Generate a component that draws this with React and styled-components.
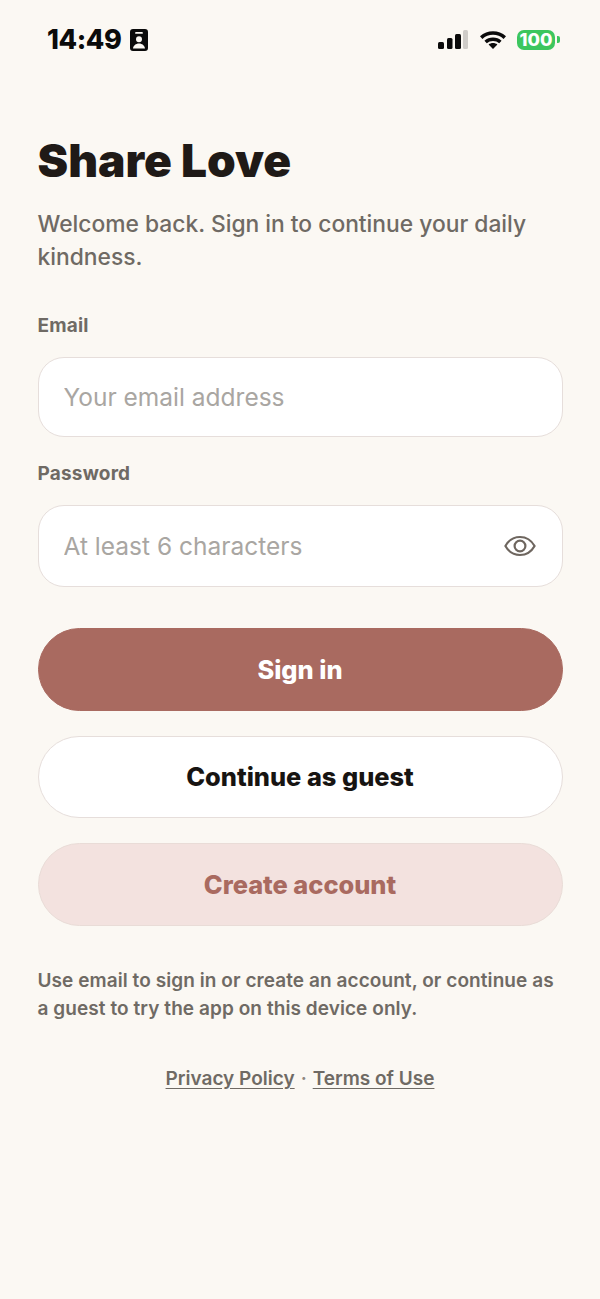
import React, { useState } from 'react';
import styled, { createGlobalStyle } from 'styled-components';

const GlobalStyle = createGlobalStyle`
  html, body {
    margin: 0;
    padding: 0;
    background: #fbf8f3;
  }
  * {
    box-sizing: border-box;
  }
`;

const Page = styled.div`
  width: 600px;
  height: 1299px;
  overflow: hidden;
  background: #fbf8f3;
  font-family: Inter, "Liberation Sans", sans-serif;
`;

const StatusBar = styled.div`
  height: 54px;
  padding: 25px 40px 0 47px;
  display: flex;
  align-items: center;
  justify-content: space-between;
`;

const StatusGroup = styled.div`
  display: flex;
  align-items: center;
  gap: ${(p) => p.$gap || 0}px;
`;

const Clock = styled.span`
  font-size: 27px;
  font-weight: 800;
  line-height: 30px;
  color: #0b0b0b;
  letter-spacing: -0.4px;
`;

const BatteryWrap = styled.div`
  display: flex;
  align-items: center;
  gap: 2px;
`;

const BatteryBody = styled.div`
  width: 38px;
  height: 20px;
  border-radius: 7px;
  background: #3cc65e;
  color: #fff;
  font-size: 18px;
  font-weight: 800;
  line-height: 20px;
  text-align: center;
`;

const BatteryCap = styled.div`
  width: 3px;
  height: 7px;
  border-radius: 0 2px 2px 0;
  background: #3cc65e;
`;

const Content = styled.main`
  padding: 78px 37.5px 0;
`;

const Title = styled.h1`
  margin: 0;
  font-size: 46px;
  line-height: 56px;
  font-weight: 900;
  color: #1f1a17;
`;

const Subtitle = styled.p`
  margin: 19px 0 0;
  font-size: 22.8px;
  line-height: 33px;
  font-weight: 500;
  color: #6f6a64;
`;

const Label = styled.label`
  display: block;
  margin-top: ${(p) => p.$top}px;
  font-size: 19px;
  line-height: 22px;
  font-weight: 700;
  letter-spacing: 0.2px;
  color: #6f6a64;
`;

const Field = styled.div`
  margin-top: 20px;
  height: ${(p) => p.$height}px;
  padding: 0 25px;
  display: flex;
  align-items: center;
  background: #fff;
  border: 1.5px solid #e6dedb;
  border-radius: 26px;
`;

const Input = styled.input`
  flex: 1;
  min-width: 0;
  padding: 0;
  border: 0;
  outline: 0;
  background: transparent;
  font-family: inherit;
  font-size: 24.5px;
  font-weight: 400;
  color: #1f1a17;

  &::placeholder {
    color: #a9a6a2;
    opacity: 1;
  }
`;

const EyeButton = styled.button`
  padding: 0;
  border: 0;
  background: none;
  display: flex;
  margin-right: 1px;
  cursor: pointer;
`;

const Buttons = styled.div`
  margin-top: 41px;
  display: flex;
  flex-direction: column;
  gap: 25px;
`;

const variants = {
  primary: 'background: #a96a60; color: #fff; border-color: #a96a60;',
  ghost: 'background: #fff; color: #171412; border-color: #e6dedb;',
  soft: 'background: #f3e2df; color: #a96a60; border-color: #e9dcd7;',
};

const Button = styled.button`
  height: 82.5px;
  border: 1.5px solid;
  border-radius: 42px;
  font-family: inherit;
  font-size: 25.4px;
  font-weight: 800;
  cursor: pointer;
  ${(p) => variants[p.$variant]}
`;

const Help = styled.p`
  margin: 41.5px 0 0;
  font-size: 19px;
  line-height: 28px;
  font-weight: 600;
  letter-spacing: 0.07px;
  color: #6f6a64;
`;

const Links = styled.div`
  margin-top: 43px;
  display: flex;
  justify-content: center;
  gap: 6px;
  font-size: 19px;
  line-height: 26px;
  font-weight: 600;
  color: #6f6a64;
`;

const LegalLink = styled.a`
  color: inherit;
  text-decoration: underline;
  text-underline-offset: 3px;
  cursor: pointer;
`;

const Dot = styled.span`
  color: #8f8881;
`;

const BadgeIcon = () => (
  <svg width="18" height="22" viewBox="0 0 18 22">
    <path
      fillRule="evenodd"
      fill="#0b0b0b"
      d="M3 0h12a3 3 0 0 1 3 3v16a3 3 0 0 1-3 3H3a3 3 0 0 1-3-3V3a3 3 0 0 1 3-3zM6 3a.9.9 0 0 0 0 1.8h6A.9.9 0 0 0 12 3zM9 7.2a3 3 0 1 0 0 6 3 3 0 0 0 0-6zM3 19.4h12c-.2-2.8-2.8-5-6-5s-5.8 2.2-6 5z"
    />
  </svg>
);

const SignalIcon = () => (
  <svg width="30" height="19" viewBox="0 0 30 19">
    <rect x="0" y="12" width="6" height="7" rx="1.5" fill="#0b0b0b" />
    <rect x="9" y="8" width="5.5" height="11" rx="1.5" fill="#0b0b0b" />
    <rect x="17" y="4" width="6" height="15" rx="1.5" fill="#0b0b0b" />
    <rect x="25" y="0" width="5" height="19" rx="1.5" fill="#cfccc8" />
  </svg>
);

const WifiIcon = () => (
  <svg width="26" height="18" viewBox="0 0 26 18" fill="none" stroke="#0b0b0b" strokeWidth="3.6">
    <path d="M1.2 6.6C8 .4 18 .4 24.8 6.6" />
    <path d="M5.6 11C9.8 7.4 16.2 7.4 20.4 11" />
    <path d="M13 18l-4.4-4.6c2.5-2 6.3-2 8.8 0z" fill="#0b0b0b" stroke="none" />
  </svg>
);

const EyeIcon = () => (
  <svg width="32" height="24" viewBox="0 0 32 24" fill="none" stroke="#6e665f" strokeWidth="2.2">
    <path d="M1.4 12C4.8 6 10 3 16 3S27.2 6 30.6 12C27.2 18 22 21 16 21S4.8 18 1.4 12z" strokeLinejoin="round" />
    <circle cx="16" cy="12" r="5.4" />
  </svg>
);

export default function App() {
  const [showPassword, setShowPassword] = useState(false);

  return (
    <Page>
      <GlobalStyle />
      <StatusBar>
        <StatusGroup $gap={9}>
          <Clock>14:49</Clock>
          <BadgeIcon />
        </StatusGroup>
        <StatusGroup $gap={11.5}>
          <SignalIcon />
          <WifiIcon />
          <BatteryWrap>
            <BatteryBody>100</BatteryBody>
            <BatteryCap />
          </BatteryWrap>
        </StatusGroup>
      </StatusBar>

      <Content>
        <Title>Share Love</Title>
        <Subtitle>Welcome back. Sign in to continue your daily kindness.</Subtitle>

        <Label $top={42}>Email</Label>
        <Field $height={80}>
          <Input type="email" placeholder="Your email address" />
        </Field>

        <Label $top={26}>Password</Label>
        <Field $height={82}>
          <Input type={showPassword ? 'text' : 'password'} placeholder="At least 6 characters" />
          <EyeButton type="button" aria-label="Show password" onClick={() => setShowPassword(!showPassword)}>
            <EyeIcon />
          </EyeButton>
        </Field>

        <Buttons>
          <Button $variant="primary">Sign in</Button>
          <Button $variant="ghost">Continue as guest</Button>
          <Button $variant="soft">Create account</Button>
        </Buttons>

        <Help>Use email to sign in or create an account, or continue as a guest to try the app on this device only.</Help>

        <Links>
          <LegalLink>Privacy Policy</LegalLink>
          <Dot>·</Dot>
          <LegalLink>Terms of Use</LegalLink>
        </Links>
      </Content>
    </Page>
  );
}
